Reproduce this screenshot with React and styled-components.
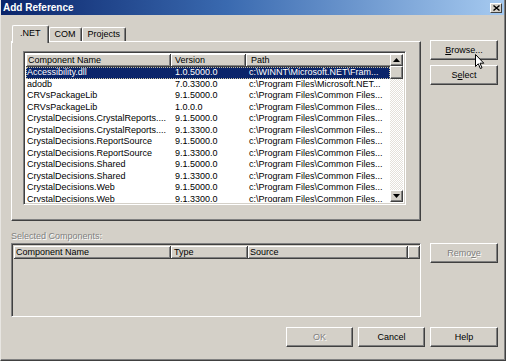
import React from "react";
import styled, { createGlobalStyle, css } from "styled-components";

const GlobalStyle = createGlobalStyle`
  html, body { margin: 0; padding: 0; background: #d4d0c8; }
  body { font-family: "Liberation Sans", Arial, sans-serif; font-size: 9px; color: #000; }
  * { box-sizing: border-box; }
`;

const raised = css`
  border: 1px solid;
  border-color: #fff #404040 #404040 #fff;
  box-shadow: inset -1px -1px #808080, inset 1px 1px #d4d0c8;
`;

const sunken = css`
  border: 1px solid;
  border-color: #808080 #fff #fff #808080;
  box-shadow: inset 1px 1px #404040, inset -1px -1px #d4d0c8;
`;

const Window = styled.div`
  position: relative;
  width: 506px;
  height: 361px;
  background: #d4d0c8;
  border-left: 1px solid #e8e6e2;
  border-right: 1px solid #404040;
  border-bottom: 1px solid #404040;
  box-shadow: inset -1px -1px #808080;
  display: flex;
  flex-direction: column;
  overflow: hidden;
`;

const TitleBar = styled.div`
  height: 15px;
  flex: none;
  margin-right: 1px;
  background: linear-gradient(to right, #0a246a 0%, #3a6ab0 45%, #a6caf0 100%);
  display: flex;
  align-items: center;
  justify-content: space-between;
  padding: 0 2px 0 2px;
`;

const Title = styled.span`
  color: #fff;
  font-weight: bold;
  font-size: 10px;
  line-height: 15px;
  letter-spacing: 0;
`;

const CloseBox = styled.div`
  width: 12px;
  height: 10px;
  background: #d4d0c8;
  border: 1px solid;
  border-color: #fff #404040 #404040 #fff;
  display: flex;
  align-items: center;
  justify-content: center;
`;

const Body = styled.div`
  flex: 1;
  display: grid;
  grid-template-columns: 410px 68px;
  column-gap: 9px;
  grid-template-rows: auto auto auto auto;
  padding: 10px 7px 0 10px;
  align-content: start;
`;

const TabArea = styled.div`
  display: flex;
  flex-direction: column;
`;

const TabStrip = styled.div`
  height: 16px;
  display: flex;
  align-items: flex-end;
  padding-left: 1px;
  position: relative;
  z-index: 1;
`;

const Tab = styled.div`
  height: ${(p) => (p.$active ? 18 : 14)}px;
  margin-bottom: ${(p) => (p.$active ? -2 : 0)}px;
  padding: 0 ${(p) => (p.$active ? 7 : 5)}px;
  padding-top: ${(p) => (p.$active ? 2 : 1)}px;
  background: #d4d0c8;
  border-top: 1px solid #fff;
  border-left: 1px solid #fff;
  border-right: 1px solid #404040;
  box-shadow: inset -1px 0 #808080;
  border-radius: 2px 2px 0 0;
  font-size: 9px;
  line-height: 11px;
  white-space: nowrap;
`;

const Panel = styled.div`
  width: 410px;
  height: 180px;
  ${raised}
  padding: 9px 10px 11px 11px;
`;

const ListBox = styled.div`
  width: ${(p) => p.$w}px;
  height: ${(p) => p.$h}px;
  ${sunken}
  padding: 2px;
  background: ${(p) => (p.$disabled ? "#d4d0c8" : "#fff")};
  display: flex;
  overflow: hidden;
`;

const ListMain = styled.div`
  flex: 1;
  display: flex;
  flex-direction: column;
  min-width: 0;
`;

const HeaderRow = styled.div`
  display: grid;
  grid-template-columns: ${(p) => p.$cols};
  height: 13px;
  flex: none;
`;

const HeaderCell = styled.div`
  background: #d4d0c8;
  border-right: 1px solid #404040;
  border-bottom: 1px solid #404040;
  box-shadow: inset 1px 1px #fff, inset -1px -1px #808080;
  padding-left: ${(p) => p.$pad}px;
  line-height: 12px;
  font-size: 9px;
  white-space: nowrap;
  overflow: hidden;
`;

const Rows = styled.div`
  flex: 1;
  overflow: hidden;
`;

const Row = styled.div`
  display: grid;
  grid-template-columns: ${(p) => p.$cols};
  height: 11.5px;
  line-height: 11.5px;
  font-size: 9px;
  white-space: nowrap;
  ${(p) =>
    p.$selected &&
    css`
      background: #0a246a;
      color: #fff;
      outline: 1px dotted #c8c0a0;
      outline-offset: -1px;
    `}
`;

const Cell = styled.div`
  padding-left: ${(p) => p.$pad}px;
  overflow: hidden;
`;

const ScrollBar = styled.div`
  width: 13px;
  flex: none;
  display: flex;
  flex-direction: column;
`;

const ScrollBtn = styled.div`
  width: 13px;
  height: 12px;
  flex: none;
  background: #d4d0c8;
  ${raised}
  display: flex;
  align-items: center;
  justify-content: center;
`;

const Thumb = styled.div`
  width: 13px;
  height: 13px;
  flex: none;
  background: #d4d0c8;
  ${raised}
`;

const Track = styled.div`
  flex: 1;
  background: repeating-conic-gradient(#ffffff 0 25%, #e4e0da 0 50%) 0 0 / 2px 2px;
`;

const SideButtons = styled.div`
  display: flex;
  flex-direction: column;
  gap: 5px;
  padding-top: ${(p) => p.$top || 0}px;
`;

const Button = styled.button`
  width: ${(p) => p.$w || 68}px;
  height: 20px;
  padding: 0;
  background: #d4d0c8;
  ${raised}
  font-family: "Liberation Sans", Arial, sans-serif;
  font-size: 9px;
  color: ${(p) => (p.disabled ? "#808080" : "#000")};
  text-shadow: ${(p) => (p.disabled ? "1px 1px #fff" : "none")};
  cursor: default;
  u { text-decoration: underline; }
`;

const Label = styled.div`
  grid-column: 1 / 3;
  padding-top: 9px;
  height: 22px;
  line-height: 12px;
  color: #808080;
  text-shadow: 1px 1px #fff;
  font-size: 9px;
`;

const Footer = styled.div`
  grid-column: 1 / 3;
  display: flex;
  justify-content: flex-end;
  gap: 5px;
  margin-top: 10px;
`;

const Cursor = styled.svg`
  position: absolute;
  left: 474px;
  top: 54px;
`;

const COLS = "145px 75px 146px";
const SEL_COLS = "157px 77px 160px 12px";

const P = "c:\\Program Files\\Common Files...";
const rows = [
  ["Accessibility.dll", "1.0.5000.0", "c:\\WINNT\\Microsoft.NET\\Fram..."],
  ["adodb", "7.0.3300.0", "c:\\Program Files\\Microsoft.NET..."],
  ["CRVsPackageLib", "9.1.5000.0", P],
  ["CRVsPackageLib", "1.0.0.0", P],
  ["CrystalDecisions.CrystalReports....", "9.1.5000.0", P],
  ["CrystalDecisions.CrystalReports....", "9.1.3300.0", P],
  ["CrystalDecisions.ReportSource", "9.1.5000.0", P],
  ["CrystalDecisions.ReportSource", "9.1.3300.0", P],
  ["CrystalDecisions.Shared", "9.1.5000.0", P],
  ["CrystalDecisions.Shared", "9.1.3300.0", P],
  ["CrystalDecisions.Web", "9.1.5000.0", P],
  ["CrystalDecisions.Web", "9.1.3300.0", P],
];

const Arrow = ({ up }) => (
  <svg width="7" height="4" viewBox="0 0 7 4">
    <path d={up ? "M3.5 0 L7 4 L0 4 Z" : "M0 0 L7 0 L3.5 4 Z"} fill="#000" />
  </svg>
);

export default function App() {
  return (
    <>
      <GlobalStyle />
      <Window>
        <TitleBar>
          <Title>Add Reference</Title>
          <CloseBox>
            <svg width="7" height="6" viewBox="0 0 7 6">
              <path d="M0.5 0.5 L6.5 5.5 M6.5 0.5 L0.5 5.5" stroke="#000" strokeWidth="1.4" />
            </svg>
          </CloseBox>
        </TitleBar>
        <Body>
          <TabArea>
            <TabStrip>
              <Tab $active>.NET</Tab>
              <Tab>COM</Tab>
              <Tab>Projects</Tab>
            </TabStrip>
            <Panel>
              <ListBox $w={383} $h={154}>
                <ListMain>
                  <HeaderRow $cols={COLS}>
                    <HeaderCell $pad={2}>Component Name</HeaderCell>
                    <HeaderCell $pad={4}>Version</HeaderCell>
                    <HeaderCell $pad={5}>Path</HeaderCell>
                  </HeaderRow>
                  <Rows>
                    {rows.map((r, i) => (
                      <Row key={i} $cols={COLS} $selected={i === 0}>
                        <Cell $pad={1}>{r[0]}</Cell>
                        <Cell $pad={4}>{r[1]}</Cell>
                        <Cell $pad={3}>{r[2]}</Cell>
                      </Row>
                    ))}
                  </Rows>
                </ListMain>
                <ScrollBar>
                  <ScrollBtn><Arrow up /></ScrollBtn>
                  <Thumb />
                  <Track />
                  <ScrollBtn><Arrow /></ScrollBtn>
                </ScrollBar>
              </ListBox>
            </Panel>
          </TabArea>
          <SideButtons $top={15}>
            <Button><u>B</u>rowse...</Button>
            <Button>S<u>e</u>lect</Button>
          </SideButtons>

          <Label>Selected Components:</Label>

          <ListBox $w={410} $h={74} $disabled>
            <ListMain>
              <HeaderRow $cols={SEL_COLS}>
                <HeaderCell $pad={2}>Component Name</HeaderCell>
                <HeaderCell $pad={3}>Type</HeaderCell>
                <HeaderCell $pad={2}>Source</HeaderCell>
                <HeaderCell $pad={0} />
              </HeaderRow>
            </ListMain>
          </ListBox>
          <SideButtons>
            <Button disabled>Remo<u>v</u>e</Button>
          </SideButtons>

          <Footer>
            <Button $w={67} disabled>OK</Button>
            <Button $w={67}>Cancel</Button>
            <Button $w={68}>Help</Button>
          </Footer>
        </Body>
        <Cursor width="10" height="16" viewBox="0 0 10 16">
          <path d="M0.5 0.5 L0.5 12.5 L3.3 9.8 L5.3 14.5 L7 13.8 L5 9.2 L8.8 9.2 Z" fill="#fff" stroke="#000" strokeWidth="1" />
        </Cursor>
      </Window>
    </>
  );
}
